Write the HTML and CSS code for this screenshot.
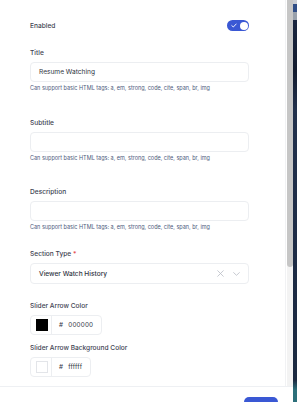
FILE: index.html
```html
<!DOCTYPE html>
<html lang="en">
<head>
    <meta charset="UTF-8">
    <meta name="viewport" content="width=device-width, initial-scale=1.0">
    <title>Edit Section</title>
    <link rel="stylesheet" href="styles.css">
</head>
<body>
    <div class="modal">
        <div class="modal-body">
            <div class="form">
                <div class="switch-row">
                    <span class="label">Enabled</span>
                    <span class="switch">
                        <svg class="check" width="6" height="5" viewBox="0 0 6 5"><path d="M0.8 2.6 L2.3 4 L5.2 1" fill="none" stroke="#fff" stroke-width="0.9" stroke-linecap="round" stroke-linejoin="round"/></svg>
                        <span class="knob"></span>
                    </span>
                </div>

                <div class="field field-title">
                    <div class="label">Title</div>
                    <div class="input">Resume Watching</div>
                    <div class="help">Can support basic HTML tags: a, em, strong, code, cite, span, br, img</div>
                </div>

                <div class="field field-subtitle">
                    <div class="label">Subtitle</div>
                    <div class="input"></div>
                    <div class="help">Can support basic HTML tags: a, em, strong, code, cite, span, br, img</div>
                </div>

                <div class="field field-description">
                    <div class="label">Description</div>
                    <div class="input"></div>
                    <div class="help">Can support basic HTML tags: a, em, strong, code, cite, span, br, img</div>
                </div>

                <div class="field field-type">
                    <div class="label">Section Type <span class="req">*</span></div>
                    <div class="input select">
                        <span class="value">Viewer Watch History</span>
                        <svg class="clear" width="7" height="7" viewBox="0 0 7 7"><path d="M0.7 0.7 L6.3 6.3 M6.3 0.7 L0.7 6.3" stroke="#b9bdc5" stroke-width="0.8" stroke-linecap="round"/></svg>
                        <svg class="caret" width="7" height="4" viewBox="0 0 7 4"><path d="M0.6 0.6 L3.5 3.3 L6.4 0.6" fill="none" stroke="#b9bdc5" stroke-width="0.8" stroke-linecap="round" stroke-linejoin="round"/></svg>
                    </div>
                </div>

                <div class="field field-color">
                    <div class="label">Slider Arrow Color</div>
                    <div class="color-input">
                        <span class="swatch-wrap"><span class="swatch swatch-black"></span></span>
                        <span class="hex"><span class="hash">#</span>000000</span>
                    </div>
                </div>

                <div class="field field-color">
                    <div class="label">Slider Arrow Background Color</div>
                    <div class="color-input">
                        <span class="swatch-wrap"><span class="swatch swatch-white"></span></span>
                        <span class="hex"><span class="hash">#</span>ffffff</span>
                    </div>
                </div>
            </div>
            <div class="scrollbar">
                <div class="thumb"></div>
            </div>
        </div>
        <div class="modal-footer">
            <button class="save">Save</button>
        </div>
    </div>
    <div class="backdrop"></div>
</body>
</html>
```

FILE: styles.css
```css
body {
    margin: 0;
    height: 402px;
    overflow: hidden;
    display: flex;
    font-family: Inter, "Noto Sans", sans-serif;
    background: #1c2a42;
}
.modal {
    width: 293px;
    flex-shrink: 0;
    background: #fff;
    display: flex;
    flex-direction: column;
}
.modal-body {
    height: 386px;
    display: flex;
    border-bottom: 1px solid #eef0f3;
    flex-shrink: 0;
}
.form {
    width: 255px;
    padding: 20px 0 0 30px;
    overflow: hidden;
    border-right: 1px solid #f1f2f4;
}
.scrollbar {
    width: 6px;
    margin-left: 1px;
    background: #f3f3f3;
}
.thumb {
    height: 267px;
    background: #c6c6c6;
    border-radius: 0 0 3px 3px;
}
.backdrop {
    flex: 1;
    background: linear-gradient(180deg, #c9ccd2 0, #c9ccd2 4px, #2f4d86 4px, #2f4d86 12px, #98a0ab 12px, #98a0ab 20px, #1a2640 20px, #131b2e 70px, #22314c 110px, #1d2b45 250px, #1b2940 380px, #2c6f7a 390px);
}

.switch-row {
    width: 219px;
    height: 11px;
    display: flex;
    align-items: center;
    justify-content: space-between;
}
.label {
    font-size: 6.6px;
    line-height: 10px;
    font-weight: 500;
    color: #3e4352;
}
.switch {
    width: 22px;
    height: 11px;
    border-radius: 6px;
    background: #3a58d4;
    display: flex;
    align-items: center;
    justify-content: space-between;
    padding: 0 1.5px 0 4px;
    box-sizing: border-box;
}
.check {
    display: block;
}
.knob {
    width: 8px;
    height: 8px;
    border-radius: 50%;
    background: #fff;
}

.field {
    width: 219px;
}
.field .label {
    margin-bottom: 4px;
}
.field-title {
    margin-top: 17px;
}
.field-subtitle {
    margin-top: 26px;
}
.field-description {
    margin-top: 25px;
}
.field-type {
    margin-top: 18px;
}
.field-color {
    margin-top: 17px;
}
.field-color + .field-color {
    margin-top: 8px;
}
.input {
    height: 20px;
    box-sizing: border-box;
    border: 1px solid #eceef1;
    border-radius: 4px;
    padding: 0 8px;
    display: flex;
    align-items: center;
    font-size: 6.6px;
    color: #2f3442;
}
.select {
    height: 21px;
}
.select .value {
    flex: 1;
    font-weight: 500;
}
.clear {
    margin-right: 9px;
}
.help {
    margin-top: 2px;
    font-size: 5.5px;
    line-height: 8px;
    color: #4d5a7c;
}
.req {
    color: #e5484d;
}

.color-input {
    display: inline-flex;
    height: 20px;
    box-sizing: border-box;
    border: 1px solid #eceef1;
    border-radius: 4px;
    font-size: 6.3px;
    color: #2f3442;
}
.swatch-wrap {
    width: 19px;
    display: flex;
    align-items: center;
    justify-content: center;
    border-right: 1px solid #eceef1;
    padding-left: 1px;
}
.swatch {
    width: 12px;
    height: 12px;
    box-sizing: border-box;
}
.swatch-black {
    background: #000;
}
.swatch-white {
    background: #fff;
    border: 1px solid #e3e5e9;
}
.hex {
    display: flex;
    align-items: center;
    padding: 0 8px 0 7px;
    letter-spacing: 0.2px;
}
.hash {
    margin-right: 5px;
}

.modal-footer {
    display: flex;
    justify-content: flex-end;
    padding: 10px 15px 0 0;
}
.save {
    width: 34px;
    height: 26px;
    border: none;
    border-radius: 5px;
    background: #3a58d4;
    color: #fff;
    font-family: inherit;
    font-size: 7px;
}
```
